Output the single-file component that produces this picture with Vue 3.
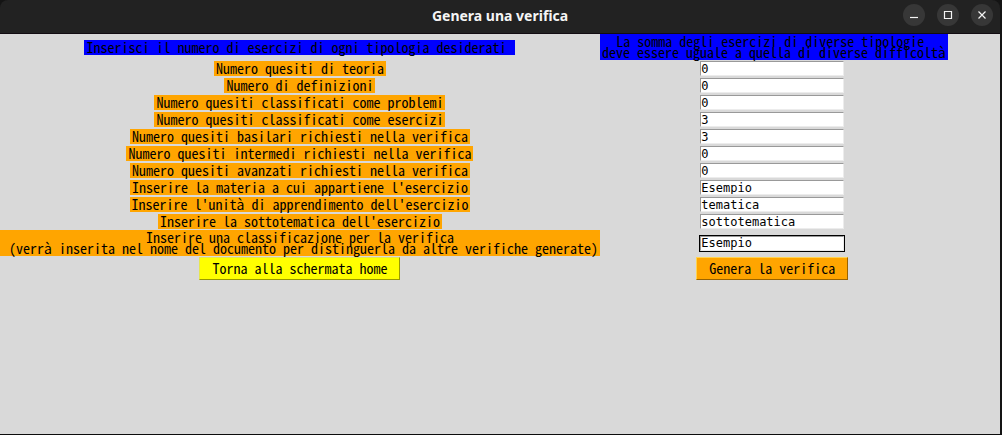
<script setup>
import { ref } from 'vue'

const fields = ref([
  { id: 'teoria', label: 'Numero quesiti di teoria', value: '0' },
  { id: 'definizioni', label: 'Numero di definizioni', value: '0' },
  { id: 'problemi', label: 'Numero quesiti classificati come problemi', value: '0' },
  { id: 'esercizi', label: 'Numero quesiti classificati come esercizi', value: '3' },
  { id: 'basilari', label: 'Numero quesiti basilari richiesti nella verifica', value: '3' },
  { id: 'intermedi', label: 'Numero quesiti intermedi richiesti nella verifica', value: '0' },
  { id: 'avanzati', label: 'Numero quesiti avanzati richiesti nella verifica', value: '0' },
  { id: 'materia', label: "Inserire la materia a cui appartiene l'esercizio", value: 'Esempio' },
  { id: 'unita', label: "Inserire l'unità di apprendimento dell'esercizio", value: 'tematica' },
  { id: 'sottotematica', label: "Inserire la sottotematica dell'esercizio", value: 'sottotematica' },
  {
    id: 'classificazione',
    label: 'Inserire una classificazione per la verifica\n (verrà inserita nel nome del documento per distinguerla da altre verifiche generate)',
    value: 'Esempio',
    active: true
  }
])
const leftHeading = 'Inserisci il numero di esercizi di ogni tipologia desiderati '
const rightHeading = 'La somma degli esercizi di diverse tipologie \ndeve essere uguale a quella di diverse difficoltà'
</script>

<template>
  <div class="window">
    <header class="titlebar">
      <h1 class="title">Genera una verifica</h1>
      <div class="controls">
        <button type="button" class="control" aria-label="Riduci a icona">
          <svg viewBox="0 0 22 22"><path d="M7 13.5h8" /></svg>
        </button>
        <button type="button" class="control" aria-label="Massimizza">
          <svg viewBox="0 0 22 22"><path d="M7.5 7.5h7v7h-7z" /></svg>
        </button>
        <button type="button" class="control" aria-label="Chiudi">
          <svg viewBox="0 0 22 22"><path d="M7.5 7.5l7 7M14.5 7.5l-7 7" /></svg>
        </button>
      </div>
    </header>
    <form class="form" @submit.prevent>
      <p class="tag heading">{{ leftHeading }}</p>
      <p class="tag heading">{{ rightHeading }}</p>
      <template v-for="field in fields" :key="field.id">
        <label class="tag" :for="field.id">{{ field.label }}</label>
        <input
          :id="field.id"
          v-model="field.value"
          class="entry"
          :class="{ active: field.active }"
          type="text"
        />
      </template>
      <button type="button" class="action home">Torna alla schermata home</button>
      <button type="submit" class="action generate">Genera la verifica</button>
    </form>
  </div>
</template>

<style>
body {
  margin: 0;
  background: #161616;
}
</style>

<style scoped>
.window {
  box-sizing: border-box;
  min-height: 100vh;
  display: flex;
  flex-direction: column;
  border-right: 2px solid #141414;
  border-bottom: 1px solid #0c0c0c;
  background: #141414;
}
.titlebar {
  box-sizing: border-box;
  height: 34px;
  display: grid;
  grid-template-columns: 1fr auto 1fr;
  align-items: center;
  padding: 0 7px 3px;
  background: #222222;
  border-bottom: 1px solid #120c12;
  border-radius: 8px 8px 0 0;
}
.title {
  grid-column: 2;
  margin: 0;
  padding-top: 2px;
  color: #f5f5f5;
  font: bold 14px/20px "Noto Sans", sans-serif;
}
.controls {
  display: flex;
  justify-content: flex-end;
  gap: 12px;
}
.control {
  width: 22px;
  height: 22px;
  padding: 0;
  border: 0;
  border-radius: 50%;
  background: #373737;
}
.control svg {
  display: block;
  width: 22px;
  height: 22px;
  fill: none;
  stroke: #f4f4f4;
  stroke-width: 1.2;
}
.form {
  flex: 1;
  display: grid;
  grid-template-columns: max-content max-content;
  align-content: start;
  align-items: center;
  justify-items: center;
  background: #d9d9d9;
  font: 14px/11px "Noto Sans Mono CJK SC", "DejaVu Sans Mono", monospace;
  font-variant-ligatures: none;
  color: #000000;
}
.tag {
  margin: 1px 0;
  padding: 2px;
  background: #ffa500;
  text-align: center;
  white-space: pre;
}
.heading {
  margin: 0;
  background: #0000ff;
}
.tag[for="classificazione"] {
  margin: 0;
}
.entry {
  box-sizing: border-box;
  width: 144px;
  height: 15px;
  margin-right: 3px;
  padding: 0;
  border: 1px solid;
  border-color: #999999 #ececec #ececec #999999;
  border-radius: 0;
  background: #ffffff;
  font: 12px/13px "DejaVu Sans Mono", monospace;
  color: inherit;
  outline: none;
}
.entry.active {
  outline: 1px solid #000000;
}
.action {
  margin-top: 1px;
  padding: 5px 12px;
  border: 1px solid;
  border-radius: 0;
  font: inherit;
  font-variant-ligatures: none;
  color: inherit;
}
.home {
  background: #ffff00;
  border-color: #e6e650 #999900 #999900 #e6e650;
}
.generate {
  margin-right: 3px;
  background: #ffa500;
  border-color: #ffd450 #996300 #996300 #ffd450;
}
</style>
